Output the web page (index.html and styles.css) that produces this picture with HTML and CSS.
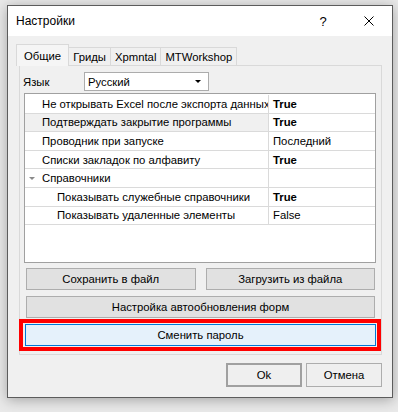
FILE: index.html
```html
<!DOCTYPE html>
<html lang="ru">
  <head>
    <meta charset="utf-8" />
    <link rel="stylesheet" href="styles.css">
    <title>Настройки</title>
  </head>
  <body>
    <div class="dialog">
      <div class="titlebar">
        <span class="title">Настройки</span>
        <span class="caption-btn help">?</span>
        <span class="caption-btn close">
          <svg width="10" height="10" viewBox="0 0 10 10">
            <path d="M0.5 0.5 L9.5 9.5 M9.5 0.5 L0.5 9.5" stroke="#000" stroke-width="1" fill="none" />
          </svg>
        </span>
      </div>

      <div class="content">
        <div class="tabs">
          <div class="tab active">Общие</div>
          <div class="tab">Гриды</div>
          <div class="tab">Xpmntal</div>
          <div class="tab">MTWorkshop</div>
        </div>

        <div class="page">
          <div class="lang-row">
            <span class="lang-label">Язык</span>
            <div class="combo">
              <span>Русский</span>
              <span class="combo-arrow"></span>
            </div>
          </div>

          <div class="grid">
            <div class="row">
              <div class="name">Не открывать Excel после экспорта данных</div>
              <div class="value bold">True</div>
            </div>
            <div class="row selected">
              <div class="name">Подтверждать закрытие программы</div>
              <div class="value bold">True</div>
            </div>
            <div class="row">
              <div class="name">Проводник при запуске</div>
              <div class="value">Последний</div>
            </div>
            <div class="row">
              <div class="name">Списки закладок по алфавиту</div>
              <div class="value bold">True</div>
            </div>
            <div class="row category">
              <div class="name"><span class="expander"></span>Справочники</div>
              <div class="value"></div>
            </div>
            <div class="row">
              <div class="name sub">Показывать служебные справочники</div>
              <div class="value bold">True</div>
            </div>
            <div class="row">
              <div class="name sub">Показывать удаленные элементы</div>
              <div class="value">False</div>
            </div>
          </div>

          <div class="btn-row">
            <button class="btn">Сохранить в файл</button>
            <button class="btn">Загрузить из файла</button>
          </div>
          <button class="btn wide">Настройка автообновления форм</button>

          <div class="highlight">
            <button class="btn focused">Сменить пароль</button>
          </div>
        </div>

        <div class="footer">
          <button class="btn dialog-btn default">Ok</button>
          <button class="btn dialog-btn">Отмена</button>
        </div>
      </div>
    </div>
  </body>
</html>
```

FILE: styles.css
```css
html,
body {
  margin: 0;
  height: 100%;
}
body {
  background-color: #e9e9e9;
  font-family: "Liberation Sans", Arial, sans-serif;
  font-size: 11.3px;
  color: #000;
  padding-top: 5px;
  padding-left: 7px;
  box-sizing: border-box;
}
.dialog {
  width: 386px;
  height: 393px;
  box-sizing: border-box;
  border: 1px solid #5c5c5c;
  background-color: #f0f0f0;
  box-shadow: 0 2px 12px rgba(0, 0, 0, 0.3);
  display: flex;
  flex-direction: column;
}
.titlebar {
  height: 30px;
  background-color: #fff;
  display: flex;
  align-items: center;
  padding-left: 8px;
}
.title {
  flex: 1;
  font-size: 12px;
}
.caption-btn {
  width: 46px;
  height: 30px;
  display: flex;
  align-items: center;
  justify-content: center;
}
.help {
  font-size: 13px;
}
.content {
  padding: 8px 10px 0 11px;
}
.tabs {
  display: flex;
  align-items: flex-end;
  margin-left: -3px;
  height: 21px;
  position: relative;
  z-index: 1;
}
.tab {
  height: 18px;
  box-sizing: border-box;
  border: 1px solid #d9d9d9;
  border-bottom: none;
  background-color: #f0f0f0;
  padding: 0 4px;
  display: flex;
  align-items: center;
  margin-left: -1px;
}
.tab.active {
  height: 22px;
  margin-left: 0;
  margin-bottom: -1px;
  padding: 0 7px;
  background-color: #f5f5f5;
}
.page {
  height: 290px;
  box-sizing: border-box;
  border: 1px solid #d9d9d9;
  background-color: #f0f0f0;
  display: flex;
  flex-direction: column;
}
.lang-row {
  display: flex;
  align-items: center;
  margin-top: 6px;
  padding-left: 3px;
}
.lang-label {
  width: 61px;
}
.combo {
  width: 125px;
  height: 19px;
  box-sizing: border-box;
  border: 1px solid #acacac;
  background-color: #fff;
  display: flex;
  align-items: center;
  justify-content: space-between;
  padding: 0 7px 0 3px;
}
.combo-arrow {
  width: 0;
  height: 0;
  border-left: 3px solid transparent;
  border-right: 3px solid transparent;
  border-top: 3px solid #000;
}
.grid {
  margin: 2px 5px 0 4px;
  height: 170px;
  box-sizing: border-box;
  border: 1px solid #a0a0a0;
  background-color: #fff;
  padding-top: 1px;
}
.row {
  display: flex;
  height: 18.6px;
  box-sizing: border-box;
  border-bottom: 1px solid #dadada;
}
.name {
  width: 244px;
  flex: none;
  box-sizing: border-box;
  padding-left: 17px;
  border-right: 1px solid #dadada;
  white-space: nowrap;
  overflow: hidden;
  display: flex;
  align-items: center;
}
.name.sub {
  padding-left: 32px;
}
.row.selected .name {
  background-color: #f0f0f0;
}
.value {
  flex: 1;
  padding-left: 4px;
  display: flex;
  align-items: center;
}
.bold {
  font-weight: bold;
}
.row.category .name {
  padding-left: 4px;
}
.expander {
  width: 0;
  height: 0;
  border-left: 3px solid transparent;
  border-right: 3px solid transparent;
  border-top: 3px solid #8a8a8a;
  margin-right: 7px;
}
.btn {
  font-family: inherit;
  font-size: 11.3px;
  color: #000;
  height: 22px;
  box-sizing: border-box;
  border: 1px solid #adadad;
  background-color: #e1e1e1;
  padding: 0;
}
.btn-row {
  display: flex;
  gap: 10px;
  margin: 5px 6px 0 6px;
}
.btn-row .btn {
  flex: 1;
}
.wide {
  margin: 6px 6px 0 6px;
}
.highlight {
  margin: 1px 0 0 -1px;
  border: 4px solid #ff0000;
  padding: 1px 1px 1px 2px;
  display: flex;
}
.focused {
  flex: 1;
  border-color: #0078d7;
  background-color: #e5f1fb;
}
.footer {
  display: flex;
  justify-content: flex-end;
  gap: 4px;
  margin-top: 8px;
}
.dialog-btn {
  width: 76px;
  height: 24px;
  background-color: #efefef;
}
.dialog-btn.default {
  border: 2px solid #a0a0a0;
}
```
